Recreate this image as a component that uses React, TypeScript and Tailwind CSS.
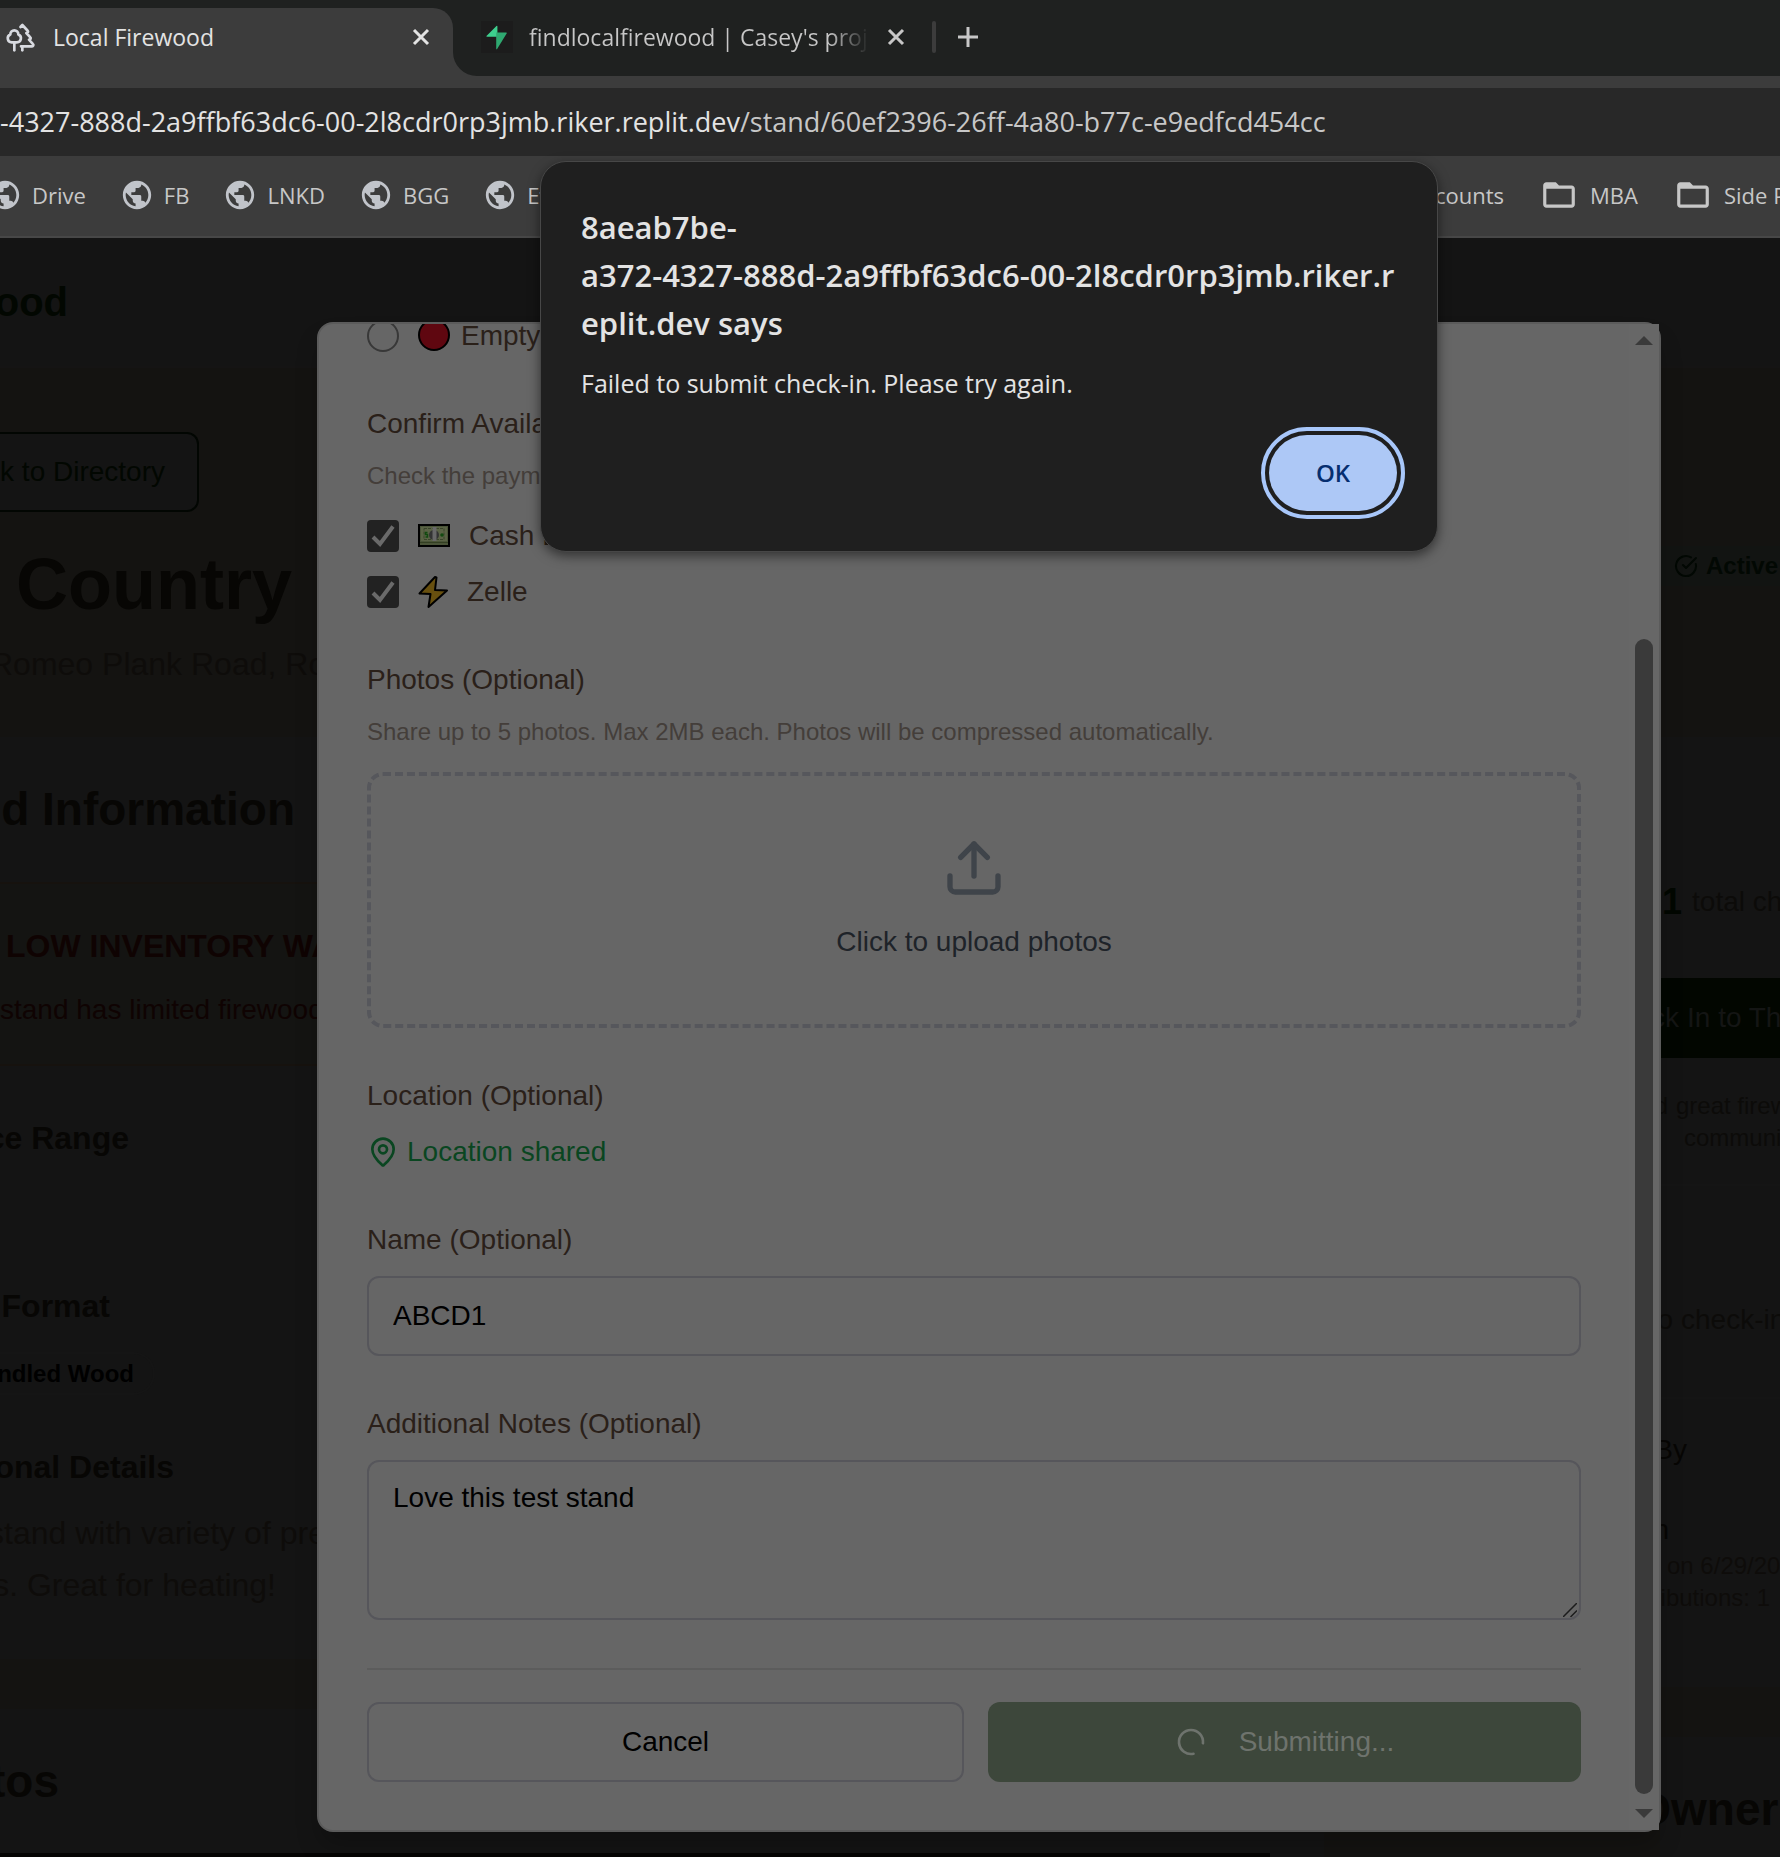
import React from "react";
import { CircleCheckBig, MapPin, Trees, Upload } from "lucide-react";
import { MdFolderOpen, MdPublic } from "react-icons/md";

const UI = "font-['Open_Sans','Noto_Sans',sans-serif]";

function CloseIcon() {
  return (
    <svg width="18" height="18" viewBox="0 0 18 18" fill="none" stroke="currentColor" strokeWidth="3">
      <path d="M2 2l14 14M16 2L2 16" />
    </svg>
  );
}

function BoltLogo() {
  return (
    <svg width="22" height="38" viewBox="0 0 22 38" className="w-8 shrink-0">
      <path d="M11 0 Q12 -1 12 1V18H1.500Q-.5 18 1 16Z" fill="#3ecf8e" transform="translate(0 8) scale(.95 .6)" />
      <path d="M11 38Q10 39 10 37V13H20.500Q22.500 13 21 15Z" fill="#2fa971" transform="translate(1 6) scale(.92 .66)" />
    </svg>
  );
}

function TabStrip() {
  return (
    <div className="flex h-[76px] bg-[#1f2120]">
      <div className="relative mt-2 flex w-[453px] items-center rounded-tr-[20px] bg-[#3c3c3c] pb-[10px] text-[#e3e3e3]">
        <Trees className="ml-[5px] size-8 shrink-0 text-[#d8dae0]" strokeWidth={2} />
        <span className="ml-4 flex-1 text-[23px] leading-8">Local Firewood</span>
        <button type="button" aria-label="Close Local Firewood" className="mr-[23px]">
          <CloseIcon />
        </button>
        <svg width="24" height="24" viewBox="0 0 24 24" className="absolute bottom-0 left-full text-[#3c3c3c]">
          <path d="M0 0A24 24 0 0 0 24 24H0Z" fill="currentColor" />
        </svg>
      </div>
      <div className="ml-7 flex items-center pb-[3px] text-[#c7c7c7]">
        <span className="flex h-8 w-8 items-center justify-center bg-[#1c1c1c]">
          <BoltLogo />
        </span>
        <span className="ml-4 w-[340px] overflow-hidden whitespace-nowrap bg-linear-to-r from-[#c7c7c7] from-88% to-transparent bg-clip-text text-[23px] leading-8 text-transparent">
          findlocalfirewood | Casey's project
        </span>
        <button type="button" aria-label="Close findlocalfirewood" className="ml-[18px]">
          <CloseIcon />
        </button>
        <span className="ml-[27px] h-8 w-1 rounded bg-[#3c3c3c]" />
        <button type="button" aria-label="New tab" className="ml-[21px]">
          <svg width="22" height="22" viewBox="0 0 22 22" fill="none" stroke="currentColor" strokeWidth="3">
            <path d="M11 1v20M1 11h20" />
          </svg>
        </button>
      </div>
    </div>
  );
}

function AddressBar() {
  return (
    <div className="mt-3 flex h-[68px] items-center overflow-hidden whitespace-nowrap bg-[#282828] text-[27px]">
      <span className="text-[#e3e3e3]">-4327-888d-2a9ffbf63dc6-00-2l8cdr0rp3jmb.riker.replit.dev</span>
      <span className="text-[#c7c7c7]">/stand/60ef2396-26ff-4a80-b77c-e9edfcd454cc</span>
    </div>
  );
}

function Bookmark({ icon, label }: { icon: "site" | "folder"; label: string }) {
  return (
    <a href="#" className={"flex shrink-0 items-center " + (icon === "site" ? "gap-2.5" : "gap-3")}>
      {icon === "site" ? (
        <MdPublic className="size-[34px] text-[#c1c4ca]" />
      ) : (
        <MdFolderOpen className="size-[38px] text-[#c7c7c7]" />
      )}
      {label}
    </a>
  );
}

function BookmarksBar() {
  return (
    <nav className="flex h-[82px] items-center justify-between overflow-hidden border-b-2 border-[#474747] pb-0.5 text-[22px] text-[#c7c7c7]">
      <div className="-ml-3 flex items-center gap-[34px]">
        {["Drive", "FB", "LNKD", "BGG", "Etsy"].map((name) => (
          <Bookmark key={name} icon="site" label={name} />
        ))}
      </div>
      <div className="flex items-center gap-9 whitespace-nowrap">
        <Bookmark icon="folder" label="Accounts" />
        <Bookmark icon="folder" label="MBA" />
        <div className="flex w-[106px]">
          <Bookmark icon="folder" label="Side Projects" />
        </div>
      </div>
    </nav>
  );
}

/* Right-aligned line whose beginning runs off the left edge of its column. */
function Cut({ width, className = "", children }: { width: string; className?: string; children: React.ReactNode }) {
  return (
    <div className={"flex justify-end whitespace-nowrap " + width}>
      <span className={className}>{children}</span>
    </div>
  );
}

function StandPage() {
  return (
    <div className="absolute inset-0 overflow-hidden bg-[#141311] text-[#0c0b09]">
      <header className="flex h-[130px] items-center border-b-2 border-[#151414] bg-[#141414]">
        <Cut width="w-[68px]" className="text-[40px] font-bold leading-[48px] text-[#020701]">
          Firewood
        </Cut>
      </header>

      <section className="flex h-[369px] justify-between whitespace-nowrap pt-16">
        <div>
          <div className="flex h-20 w-[199px] items-center rounded-r-xl border-y-2 border-r-2 border-[#020602] bg-[#141414]">
            <Cut width="w-[165px]" className="text-[28px] leading-10 text-[#020701]">
              Back to Directory
            </Cut>
          </div>
          <h1 className="mt-8 pl-4 text-[72px] font-bold leading-[80px] text-[#070604]">Country</h1>
          <p className="-ml-2.5 mt-4 text-[32px] leading-[48px] text-[#0e0c0a]">Romeo Plank Road, Romeo</p>
        </div>
        <div className="mt-[114px] flex h-10 w-[120px] items-center gap-2 self-start bg-[#121412] pl-[14px] text-2xl font-bold text-[#020803]">
          <CircleCheckBig className="size-6 shrink-0" />
          Active
        </div>
      </section>

      <div className="flex justify-between">
        <div className="w-[1324px] whitespace-nowrap">
          <section className="bg-[#141414] pb-12 pt-12">
            <Cut width="w-[295px]" className="text-[46px] font-bold leading-[48px] text-[#070604]">
              Stand Information
            </Cut>
            <div className="mt-[49px] h-[184px] border-y-2 border-[#16120e] bg-[#141412] pt-[38px] text-[#0f0302]">
              <p className="pl-1.5 text-[32px] font-bold leading-[48px]">LOW INVENTORY WARNING</p>
              <p className="mt-5 text-[28px] leading-10">stand has limited firewood</p>
            </div>
            <div className="mt-12 text-[32px] font-bold leading-[48px] text-[#070604]">
              <Cut width="w-[129px]">Price Range</Cut>
              <Cut width="mt-30 w-[110px]">Wood Format</Cut>
            </div>
            <div className="mt-[22px] flex h-[43px] w-[155px] items-center rounded-r-full border-y-2 border-r-2 border-[#151515]">
              <Cut width="w-[134px]" className="text-2xl font-bold text-black">
                Bundled Wood
              </Cut>
            </div>
            <Cut width="mt-12 w-[174px]" className="text-[32px] font-bold leading-[48px] text-[#070604]">
              Additional Details
            </Cut>
            <div className="-ml-3 mt-4 text-[32px] leading-[52px] text-[#0e0c0a]">
              <p>stand with variety of premium</p>
              <Cut width="w-[288px]">options. Great for heating!</Cut>
            </div>
          </section>
          <section className="mt-[50px] bg-[#141414] pt-12">
            <Cut width="w-[59px]" className="text-[46px] font-bold leading-[48px] text-[#070604]">
              Photos
            </Cut>
            <div className="mt-12 h-40 w-[1270px] bg-[#050403]" />
          </section>
        </div>

        <aside className="w-[120px] shrink-0 overflow-hidden whitespace-nowrap text-[28px] leading-10">
          <section className="h-[449px] border-b-2 border-[#151515] bg-[#141414] pt-[145px]">
            <p className="flex items-center gap-2.5 pl-0.5">
              <b className="text-4xl text-[#020701]">1</b>total check-ins
            </p>
            <div className="mt-14 flex h-20 w-[200px] items-center bg-[#020600] text-[#141514]">
              <Cut width="w-[19px]">Check</Cut>
              <span className="pl-2">In to This Stand</span>
            </div>
            <div className="mt-8 text-2xl">
              <p className="flex h-8 items-center gap-2">
                <Cut width="w-2">Find</Cut>
                great firewood
              </p>
              <p className="h-8 pl-6 leading-8">community</p>
            </div>
          </section>
          <section className="h-[213px] border-b-2 border-[#151515] bg-[#141414] pt-[114px]">
            <p className="flex gap-2">
              <Cut width="w-[13px]">No</Cut>
              check-ins
            </p>
          </section>
          <section className="h-[288px] bg-[#141414] pt-[31px] text-[#070604]">
            <Cut width="w-[27px]">Submitted By</Cut>
            <Cut width="mt-10 w-[9px]">Admin</Cut>
            <div className="text-2xl leading-8 text-[#0e0c0a]">
              <p className="pl-[7px]">on 6/29/2025</p>
              <Cut width="w-[110px]">Contributions: 1</Cut>
            </div>
          </section>
          <section className="mt-[50px] h-60 bg-[#141414] pt-12">
            <div className="flex text-[46px] font-bold leading-[48px] text-[#070604]">
              <Cut width="w-[11px]">O</Cut>
              wner
            </div>
          </section>
        </aside>
      </div>
    </div>
  );
}

function RedCircle() {
  return (
    <svg width="38" height="32" viewBox="0 0 38 32">
      <circle cx="19" cy="15" r="15" fill="#5f0710" stroke="#000" strokeWidth="2" />
    </svg>
  );
}

function Banknote() {
  return (
    <svg width="38" height="32" viewBox="0 0 38 32">
      <rect x="4" y="5" width="30" height="21" fill="#4a5438" stroke="#000" strokeWidth="2" />
      <rect x="6" y="7" width="26" height="14" fill="#5a6345" />
      <path d="M9 8.500h20v11H9z" fill="none" stroke="#39442a" strokeWidth="1" strokeDasharray="3 1" />
      <path d="M5 22.500h28" stroke="#333f22" strokeWidth="1" />
      <circle cx="19" cy="15" r="5" fill="#333" />
      <path d="M17.500 7h4v14h-4z" fill="#686868" />
      <path d="M12.500 12.500h-2v2h2v2.500h-2" fill="none" stroke="#124a10" strokeWidth="1.500" />
      <circle cx="27" cy="15" r="1.800" fill="#124a10" />
    </svg>
  );
}

function Lightning() {
  return (
    <svg width="36" height="34" viewBox="0 0 36 34">
      <path
        d="M20 2 4.500 18.500l11 .5-2 13L32 15.500l-12-.5 1.500-12.500Z"
        fill="#68500f"
        stroke="#000"
        strokeWidth="2"
        strokeLinejoin="round"
      />
    </svg>
  );
}

function CheckRow({ id, icon, label }: { id: string; icon: React.ReactNode; label: string }) {
  return (
    <div className="flex h-10 items-center gap-4">
      <span className="relative flex">
        <input id={id} type="checkbox" defaultChecked className="size-8 appearance-none rounded bg-[#222222]" />
        <svg
          viewBox="0 0 32 32"
          className="pointer-events-none absolute inset-0"
          fill="none"
          stroke="#6a6a6a"
          strokeWidth="4"
        >
          <path d="M6 17l7 7L26 6.500" />
        </svg>
      </span>
      <label htmlFor={id} className="flex items-center gap-4">
        {icon}
        {label}
      </label>
    </div>
  );
}

function Scrollbar() {
  return (
    <div className="flex w-[30px] shrink-0 flex-col items-center bg-[#676767] py-3">
      <svg width="18" height="9" viewBox="0 0 18 9">
        <path d="M9 0 18 9H0Z" fill="#3a3a3a" />
      </svg>
      <div className="mt-[294px] w-[18px] flex-1 rounded-full bg-[#3a3a3a]" />
      <svg width="18" height="9" viewBox="0 0 18 9" className="mt-[15px]">
        <path d="M9 9 18 0H0Z" fill="#3a3a3a" />
      </svg>
    </div>
  );
}

function CheckInModal() {
  return (
    <div
      role="dialog"
      aria-label="Check in"
      className="absolute left-[317px] right-[119px] top-[84px] flex rounded-2xl border-2 border-[#5b5b5b] bg-[#666666] text-[28px] leading-10 text-[#2a2019] shadow-[0_16px_24px_-4px_rgba(0,0,0,0.25)]"
    >
      <form className="flex min-w-0 flex-1 flex-col gap-12 overflow-hidden px-12 pb-12">
        <div className="-mt-2 flex h-10 items-center gap-4">
          <input id="empty" type="radio" name="stock" className="size-8 appearance-none rounded-full border-2 border-[#383838]" />
          <label htmlFor="empty" className="flex items-center gap-2">
            <RedCircle />
            Empty
          </label>
        </div>

        <fieldset>
          <legend>Confirm Available Payments</legend>
          <p className="mt-4 text-2xl leading-8 text-[#443e3a]">Check the payment methods</p>
          <div className="mt-6 flex flex-col gap-4">
            <CheckRow id="cash" icon={<Banknote />} label="Cash Box" />
            <CheckRow id="zelle" icon={<Lightning />} label="Zelle" />
          </div>
        </fieldset>

        <div>
          <div>Photos (Optional)</div>
          <p className="mt-4 text-2xl leading-8 text-[#443e3a]">
            Share up to 5 photos. Max 2MB each. Photos will be compressed automatically.
          </p>
          <button
            type="button"
            className="mt-6 flex h-64 w-full flex-col items-center gap-[22px] rounded-2xl border-4 border-dashed border-[#56575c] pt-15 text-[#1e2329]"
          >
            <Upload className="size-16 text-[#3f444a]" strokeWidth={2} />
            Click to upload photos
          </button>
        </div>

        <div>
          <div>Location (Optional)</div>
          <p className="mt-4 flex items-center gap-2 text-[#0a4621]">
            <MapPin className="size-8" />
            Location shared
          </p>
        </div>

        <div>
          <label htmlFor="name" className="block">
            Name (Optional)
          </label>
          <input
            id="name"
            defaultValue="ABCD1"
            className="mt-4 block h-20 w-full rounded-xl border-2 border-[#56565b] px-6 text-black"
          />
        </div>

        <div>
          <label htmlFor="notes" className="block">
            Additional Notes (Optional)
          </label>
          <div className="relative mt-4">
            <textarea
              id="notes"
              defaultValue="Love this test stand"
              className="block h-40 w-full resize-none rounded-xl border-2 border-[#56565b] px-6 py-4 text-black"
            />
            <svg width="14" height="14" viewBox="0 0 14 14" className="absolute bottom-[3px] right-1" stroke="#1c1c1c" strokeWidth="1.500">
              <path d="M0 14 14 0M7.500 14 14 7.500" />
            </svg>
          </div>
        </div>

        <div className="flex gap-6 border-t-2 border-[#5c5c5c] pt-8">
          <button type="button" className="h-20 flex-1 rounded-xl border-2 border-[#56565b] px-8 text-black">
            Cancel
          </button>
          <button
            type="submit"
            disabled
            className="flex h-20 flex-1 items-center justify-center gap-8 rounded-xl bg-[#3d473b] px-8 text-[#6e736d]"
          >
            <svg width="32" height="32" viewBox="0 0 24 24" fill="none" stroke="currentColor" strokeWidth="2" strokeLinecap="round">
              <path d="M21 12a9 9 0 1 1-6.219-8.56" transform="rotate(78 12 12)" />
            </svg>
            Submitting...
          </button>
        </div>
      </form>
      <Scrollbar />
    </div>
  );
}

function AlertBox() {
  return (
    <div
      role="alertdialog"
      aria-labelledby="alert-title"
      className={
        "absolute left-[540px] top-[161px] w-[898px] rounded-[26px] border border-[#474747] bg-[#1f1f1f] px-10 pb-10 pt-[41px] text-[#e3e3e3] shadow-[0_4px_12px_rgba(0,0,0,0.5)] " +
        UI
      }
    >
      <h2 id="alert-title" className="text-[31px] font-semibold leading-[48px]">
        8aeab7be-
        <br />
        a372-4327-888d-2a9ffbf63dc6-00-2l8cdr0rp3jmb.riker.r
        <br />
        eplit.dev says
      </h2>
      <p className="mt-5 text-[25px] leading-8">Failed to submit check-in. Please try again.</p>
      <div className="mt-9 flex justify-end">
        <button
          type="button"
          className="h-[76px] w-[128px] rounded-full bg-[#adc8f6] text-2xl font-semibold text-[#062e6f] outline-4 outline-offset-4 outline-[#a8c7fa]"
        >
          OK
        </button>
      </div>
    </div>
  );
}

export default function App() {
  return (
    <div className="relative flex h-screen flex-col overflow-hidden bg-[#3c3c3c]">
      <div className={UI}>
        <TabStrip />
        <AddressBar />
        <BookmarksBar />
      </div>
      <main className="relative flex-1 font-['Liberation_Sans',Arial,sans-serif]">
        <StandPage />
        <CheckInModal />
      </main>
      <AlertBox />
    </div>
  );
}
